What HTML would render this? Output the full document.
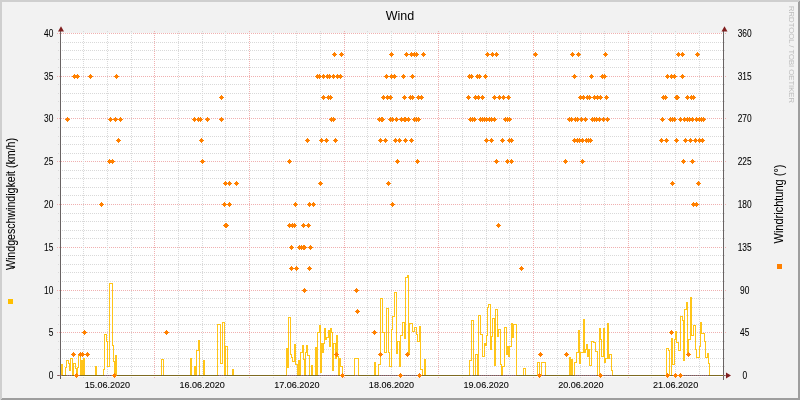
<!DOCTYPE html><html><head><meta charset="utf-8"><style>html,body{margin:0;padding:0;width:800px;height:400px;overflow:hidden;background:#f2f2f2}svg{display:block;-webkit-font-smoothing:antialiased}text{font-family:"Liberation Sans",sans-serif;stroke:#000;stroke-width:0.08px}</style></head><body>
<svg width="800" height="400" viewBox="0 0 800 400" style="will-change:transform">
<rect x="0" y="0" width="800" height="400" fill="#f2f2f2"/>
<path shape-rendering="crispEdges" fill="#cfcfcf" d="M0 0H800V1H0ZM0 1H799V2H0ZM0 2H2V399H0ZM0 399H1V400H0Z"/>
<path shape-rendering="crispEdges" fill="#9e9e9e" d="M799 1H800V400H799ZM798 2H799V400H798ZM1 399H798V400H1ZM2 398H798V399H2Z"/>
<rect x="61" y="33" width="662" height="344" fill="#ffffff"/>
<!--DATA-->
<g shape-rendering="crispEdges"><line x1="58" y1="366.5" x2="726" y2="366.5" stroke="#d9d9d9" stroke-width="1" stroke-dasharray="1 1"/><line x1="58" y1="358.5" x2="726" y2="358.5" stroke="#d9d9d9" stroke-width="1" stroke-dasharray="1 1"/><line x1="58" y1="349.5" x2="726" y2="349.5" stroke="#d9d9d9" stroke-width="1" stroke-dasharray="1 1"/><line x1="58" y1="341.5" x2="726" y2="341.5" stroke="#d9d9d9" stroke-width="1" stroke-dasharray="1 1"/><line x1="57" y1="332.5" x2="726" y2="332.5" stroke="#f0b0b0" stroke-width="1" stroke-dasharray="1 1" stroke-dashoffset="0"/><line x1="58" y1="324.5" x2="726" y2="324.5" stroke="#d9d9d9" stroke-width="1" stroke-dasharray="1 1"/><line x1="58" y1="315.5" x2="726" y2="315.5" stroke="#d9d9d9" stroke-width="1" stroke-dasharray="1 1"/><line x1="58" y1="307.5" x2="726" y2="307.5" stroke="#d9d9d9" stroke-width="1" stroke-dasharray="1 1"/><line x1="58" y1="298.5" x2="726" y2="298.5" stroke="#d9d9d9" stroke-width="1" stroke-dasharray="1 1"/><line x1="57" y1="290.5" x2="726" y2="290.5" stroke="#f0b0b0" stroke-width="1" stroke-dasharray="1 1" stroke-dashoffset="0"/><line x1="58" y1="281.5" x2="726" y2="281.5" stroke="#d9d9d9" stroke-width="1" stroke-dasharray="1 1"/><line x1="58" y1="272.5" x2="726" y2="272.5" stroke="#d9d9d9" stroke-width="1" stroke-dasharray="1 1"/><line x1="58" y1="264.5" x2="726" y2="264.5" stroke="#d9d9d9" stroke-width="1" stroke-dasharray="1 1"/><line x1="58" y1="255.5" x2="726" y2="255.5" stroke="#d9d9d9" stroke-width="1" stroke-dasharray="1 1"/><line x1="57" y1="247.5" x2="726" y2="247.5" stroke="#f0b0b0" stroke-width="1" stroke-dasharray="1 1" stroke-dashoffset="0"/><line x1="58" y1="238.5" x2="726" y2="238.5" stroke="#d9d9d9" stroke-width="1" stroke-dasharray="1 1"/><line x1="58" y1="230.5" x2="726" y2="230.5" stroke="#d9d9d9" stroke-width="1" stroke-dasharray="1 1"/><line x1="58" y1="221.5" x2="726" y2="221.5" stroke="#d9d9d9" stroke-width="1" stroke-dasharray="1 1"/><line x1="58" y1="213.5" x2="726" y2="213.5" stroke="#d9d9d9" stroke-width="1" stroke-dasharray="1 1"/><line x1="57" y1="204.5" x2="726" y2="204.5" stroke="#f0b0b0" stroke-width="1" stroke-dasharray="1 1" stroke-dashoffset="0"/><line x1="58" y1="195.5" x2="726" y2="195.5" stroke="#d9d9d9" stroke-width="1" stroke-dasharray="1 1"/><line x1="58" y1="187.5" x2="726" y2="187.5" stroke="#d9d9d9" stroke-width="1" stroke-dasharray="1 1"/><line x1="58" y1="178.5" x2="726" y2="178.5" stroke="#d9d9d9" stroke-width="1" stroke-dasharray="1 1"/><line x1="58" y1="170.5" x2="726" y2="170.5" stroke="#d9d9d9" stroke-width="1" stroke-dasharray="1 1"/><line x1="57" y1="161.5" x2="726" y2="161.5" stroke="#f0b0b0" stroke-width="1" stroke-dasharray="1 1" stroke-dashoffset="0"/><line x1="58" y1="153.5" x2="726" y2="153.5" stroke="#d9d9d9" stroke-width="1" stroke-dasharray="1 1"/><line x1="58" y1="144.5" x2="726" y2="144.5" stroke="#d9d9d9" stroke-width="1" stroke-dasharray="1 1"/><line x1="58" y1="136.5" x2="726" y2="136.5" stroke="#d9d9d9" stroke-width="1" stroke-dasharray="1 1"/><line x1="58" y1="127.5" x2="726" y2="127.5" stroke="#d9d9d9" stroke-width="1" stroke-dasharray="1 1"/><line x1="57" y1="118.5" x2="726" y2="118.5" stroke="#f0b0b0" stroke-width="1" stroke-dasharray="1 1" stroke-dashoffset="0"/><line x1="58" y1="110.5" x2="726" y2="110.5" stroke="#d9d9d9" stroke-width="1" stroke-dasharray="1 1"/><line x1="58" y1="101.5" x2="726" y2="101.5" stroke="#d9d9d9" stroke-width="1" stroke-dasharray="1 1"/><line x1="58" y1="93.5" x2="726" y2="93.5" stroke="#d9d9d9" stroke-width="1" stroke-dasharray="1 1"/><line x1="58" y1="84.5" x2="726" y2="84.5" stroke="#d9d9d9" stroke-width="1" stroke-dasharray="1 1"/><line x1="57" y1="76.5" x2="726" y2="76.5" stroke="#f0b0b0" stroke-width="1" stroke-dasharray="1 1" stroke-dashoffset="0"/><line x1="58" y1="67.5" x2="726" y2="67.5" stroke="#d9d9d9" stroke-width="1" stroke-dasharray="1 1"/><line x1="58" y1="59.5" x2="726" y2="59.5" stroke="#d9d9d9" stroke-width="1" stroke-dasharray="1 1"/><line x1="58" y1="50.5" x2="726" y2="50.5" stroke="#d9d9d9" stroke-width="1" stroke-dasharray="1 1"/><line x1="58" y1="42.5" x2="726" y2="42.5" stroke="#d9d9d9" stroke-width="1" stroke-dasharray="1 1"/><line x1="57" y1="33.5" x2="726" y2="33.5" stroke="#f0b0b0" stroke-width="1" stroke-dasharray="1 1" stroke-dashoffset="0"/><line x1="83.5" y1="31" x2="83.5" y2="378" stroke="#d9d9d9" stroke-width="1" stroke-dasharray="1 1"/><line x1="107.5" y1="31" x2="107.5" y2="378" stroke="#d9d9d9" stroke-width="1" stroke-dasharray="1 1"/><line x1="131.5" y1="31" x2="131.5" y2="378" stroke="#d9d9d9" stroke-width="1" stroke-dasharray="1 1"/><line x1="154.5" y1="31" x2="154.5" y2="378" stroke="#f0b0b0" stroke-width="1" stroke-dasharray="1 1"/><line x1="178.5" y1="31" x2="178.5" y2="378" stroke="#d9d9d9" stroke-width="1" stroke-dasharray="1 1"/><line x1="202.5" y1="31" x2="202.5" y2="378" stroke="#d9d9d9" stroke-width="1" stroke-dasharray="1 1"/><line x1="225.5" y1="31" x2="225.5" y2="378" stroke="#d9d9d9" stroke-width="1" stroke-dasharray="1 1"/><line x1="249.5" y1="31" x2="249.5" y2="378" stroke="#f0b0b0" stroke-width="1" stroke-dasharray="1 1"/><line x1="273.5" y1="31" x2="273.5" y2="378" stroke="#d9d9d9" stroke-width="1" stroke-dasharray="1 1"/><line x1="296.5" y1="31" x2="296.5" y2="378" stroke="#d9d9d9" stroke-width="1" stroke-dasharray="1 1"/><line x1="320.5" y1="31" x2="320.5" y2="378" stroke="#d9d9d9" stroke-width="1" stroke-dasharray="1 1"/><line x1="344.5" y1="31" x2="344.5" y2="378" stroke="#f0b0b0" stroke-width="1" stroke-dasharray="1 1"/><line x1="367.5" y1="31" x2="367.5" y2="378" stroke="#d9d9d9" stroke-width="1" stroke-dasharray="1 1"/><line x1="391.5" y1="31" x2="391.5" y2="378" stroke="#d9d9d9" stroke-width="1" stroke-dasharray="1 1"/><line x1="415.5" y1="31" x2="415.5" y2="378" stroke="#d9d9d9" stroke-width="1" stroke-dasharray="1 1"/><line x1="438.5" y1="31" x2="438.5" y2="378" stroke="#f0b0b0" stroke-width="1" stroke-dasharray="1 1"/><line x1="462.5" y1="31" x2="462.5" y2="378" stroke="#d9d9d9" stroke-width="1" stroke-dasharray="1 1"/><line x1="486.5" y1="31" x2="486.5" y2="378" stroke="#d9d9d9" stroke-width="1" stroke-dasharray="1 1"/><line x1="509.5" y1="31" x2="509.5" y2="378" stroke="#d9d9d9" stroke-width="1" stroke-dasharray="1 1"/><line x1="533.5" y1="31" x2="533.5" y2="378" stroke="#f0b0b0" stroke-width="1" stroke-dasharray="1 1"/><line x1="557.5" y1="31" x2="557.5" y2="378" stroke="#d9d9d9" stroke-width="1" stroke-dasharray="1 1"/><line x1="580.5" y1="31" x2="580.5" y2="378" stroke="#d9d9d9" stroke-width="1" stroke-dasharray="1 1"/><line x1="604.5" y1="31" x2="604.5" y2="378" stroke="#d9d9d9" stroke-width="1" stroke-dasharray="1 1"/><line x1="628.5" y1="31" x2="628.5" y2="378" stroke="#f0b0b0" stroke-width="1" stroke-dasharray="1 1"/><line x1="651.5" y1="31" x2="651.5" y2="378" stroke="#d9d9d9" stroke-width="1" stroke-dasharray="1 1"/><line x1="675.5" y1="31" x2="675.5" y2="378" stroke="#d9d9d9" stroke-width="1" stroke-dasharray="1 1"/><line x1="699.5" y1="31" x2="699.5" y2="378" stroke="#d9d9d9" stroke-width="1" stroke-dasharray="1 1"/></g>
<g shape-rendering="crispEdges">
<rect x="60" y="31" width="1" height="348" fill="#686262"/>
<rect x="723" y="31" width="1" height="349" fill="#686262"/>
</g>
<path fill="none" stroke="#ffbf00" stroke-width="1" shape-rendering="crispEdges" stroke-opacity="0.9" d="M61.5 375.5H61.5V364.5H62.5V375.5H65.5V367.5H66.5V360.5H68.5V363.5H69.5V370.5H70.5V358.5H72.5V375.5H73.5V363.5H75.5V368.5H76.5V375.5H77.5V367.5H78.5V355.5H80.5V375.5H81.5V360.5H82.5V375.5H83.5V358.5H84.5V375.5H95.5V366.5H96.5V375.5H103.5V369.5H104.5V334.5H106.5V341.5H107.5V366.5H109.5V283.5H112.5V345.5H113.5V361.5H114.5V375.5H115.5V355.5H116.5V375.5H161.5V359.5H163.5V375.5H190.5V358.5H191.5V375.5H194.5V366.5H195.5V375.5H196.5V350.5H198.5V340.5H199.5V375.5H203.5V360.5H204.5V375.5H217.5V324.5H220.5V363.5H222.5V322.5H224.5V375.5H225.5V346.5H227.5V375.5H232.5V369.5H233.5V375.5H286.5V348.5H287.5V367.5H288.5V317.5H290.5V354.5H291.5V357.5H292.5V361.5H294.5V344.5H295.5V364.5H297.5V375.5H298.5V360.5H299.5V375.5H300.5V352.5H302.5V345.5H303.5V359.5H304.5V375.5H305.5V352.5H306.5V345.5H307.5V355.5H309.5V375.5H311.5V365.5H312.5V375.5H315.5V347.5H316.5V375.5H317.5V332.5H319.5V325.5H320.5V372.5H321.5V343.5H322.5V352.5H323.5V343.5H324.5V328.5H325.5V339.5H326.5V337.5H328.5V330.5H329.5V346.5H330.5V328.5H331.5V332.5H332.5V370.5H333.5V343.5H335.5V358.5H336.5V335.5H337.5V356.5H338.5V375.5H339.5V358.5H340.5V366.5H342.5V375.5H354.5V358.5H358.5V375.5H374.5V362.5H375.5V375.5H378.5V364.5H380.5V298.5H382.5V332.5H384.5V352.5H386.5V308.5H388.5V352.5H389.5V366.5H391.5V329.5H392.5V316.5H394.5V292.5H396.5V353.5H397.5V341.5H399.5V366.5H400.5V335.5H402.5V322.5H404.5V338.5H405.5V277.5H407.5V275.5H408.5V354.5H409.5V323.5H412.5V331.5H414.5V327.5H416.5V334.5H417.5V341.5H419.5V326.5H420.5V369.5H422.5V375.5H424.5V359.5H425.5V375.5H469.5V360.5H471.5V320.5H473.5V375.5H475.5V354.5H477.5V375.5H478.5V315.5H480.5V334.5H482.5V356.5H484.5V343.5H485.5V345.5H486.5V335.5H487.5V307.5H488.5V304.5H490.5V349.5H491.5V336.5H492.5V318.5H494.5V365.5H495.5V309.5H497.5V336.5H498.5V329.5H500.5V364.5H501.5V375.5H502.5V366.5H504.5V327.5H506.5V354.5H507.5V346.5H508.5V356.5H509.5V346.5H511.5V323.5H512.5V337.5H513.5V324.5H516.5V375.5H523.5V368.5H525.5V375.5H537.5V362.5H539.5V375.5H541.5V362.5H545.5V375.5H569.5V357.5H570.5V375.5H571.5V359.5H572.5V375.5H574.5V362.5H576.5V352.5H578.5V330.5H579.5V363.5H580.5V352.5H583.5V319.5H584.5V352.5H585.5V349.5H586.5V344.5H587.5V356.5H588.5V349.5H589.5V365.5H591.5V341.5H593.5V342.5H595.5V351.5H597.5V375.5H599.5V328.5H600.5V339.5H601.5V356.5H603.5V328.5H604.5V362.5H605.5V358.5H607.5V323.5H608.5V358.5H609.5V354.5H611.5V370.5H612.5V375.5H666.5V348.5H668.5V350.5H669.5V375.5H671.5V338.5H672.5V364.5H674.5V339.5H675.5V331.5H676.5V342.5H678.5V350.5H680.5V316.5H682.5V320.5H683.5V360.5H684.5V309.5H686.5V302.5H687.5V354.5H688.5V339.5H690.5V297.5H691.5V335.5H693.5V325.5H695.5V349.5H696.5V357.5H699.5V346.5H700.5V322.5H701.5V333.5H704.5V341.5H705.5V357.5H707.5V353.5H708.5V363.5H709.5V375.5H723"/>
<rect x="57" y="375" width="670" height="1" fill="#6a6262" shape-rendering="crispEdges"/>
<line x1="57" y1="375.5" x2="726" y2="375.5" stroke="#a87272" stroke-width="1" stroke-dasharray="1 1" shape-rendering="crispEdges"/>
<path fill="#7d6a22" shape-rendering="crispEdges" d="M62 375h4v1h-4zM72 375h2v1h-2zM76 375h2v1h-2zM80 375h2v1h-2zM82 375h2v1h-2zM84 375h12v1h-12zM96 375h8v1h-8zM114 375h2v1h-2zM116 375h46v1h-46zM163 375h28v1h-28zM191 375h4v1h-4zM195 375h2v1h-2zM199 375h5v1h-5zM204 375h14v1h-14zM224 375h2v1h-2zM227 375h6v1h-6zM233 375h54v1h-54zM297 375h2v1h-2zM299 375h2v1h-2zM304 375h2v1h-2zM309 375h3v1h-3zM312 375h4v1h-4zM316 375h2v1h-2zM338 375h2v1h-2zM342 375h13v1h-13zM358 375h17v1h-17zM375 375h4v1h-4zM422 375h3v1h-3zM425 375h45v1h-45zM473 375h3v1h-3zM477 375h2v1h-2zM501 375h2v1h-2zM516 375h8v1h-8zM525 375h13v1h-13zM539 375h3v1h-3zM545 375h25v1h-25zM570 375h2v1h-2zM572 375h3v1h-3zM597 375h3v1h-3zM612 375h55v1h-55zM669 375h3v1h-3zM709 375h14v1h-14z"/>
<path d="M58 31.5 L61 26.2 L64 31.5 Z" fill="#801f1f"/>
<path d="M721.5 31.5 L724.5 26.2 L727.5 31.5 Z" fill="#801f1f"/>
<path d="M726 372.5 L731 375.5 L726 378.5 Z" fill="#801f1f"/>
<path shape-rendering="crispEdges" fill="#ff8000" d="M334 52h1v5h-1zM332 54h5v1h-5zM333 53h3v3h-3zM341 52h1v5h-1zM339 54h5v1h-5zM340 53h3v3h-3zM391 52h1v5h-1zM389 54h5v1h-5zM390 53h3v3h-3zM406 52h1v5h-1zM404 54h5v1h-5zM405 53h3v3h-3zM411 52h1v5h-1zM409 54h5v1h-5zM410 53h3v3h-3zM414 52h1v5h-1zM412 54h5v1h-5zM413 53h3v3h-3zM416 52h1v5h-1zM414 54h5v1h-5zM415 53h3v3h-3zM423 52h1v5h-1zM421 54h5v1h-5zM422 53h3v3h-3zM487 52h1v5h-1zM485 54h5v1h-5zM486 53h3v3h-3zM492 52h1v5h-1zM490 54h5v1h-5zM491 53h3v3h-3zM496 52h1v5h-1zM494 54h5v1h-5zM495 53h3v3h-3zM535 52h1v5h-1zM533 54h5v1h-5zM534 53h3v3h-3zM572 52h1v5h-1zM570 54h5v1h-5zM571 53h3v3h-3zM578 52h1v5h-1zM576 54h5v1h-5zM577 53h3v3h-3zM605 52h1v5h-1zM603 54h5v1h-5zM604 53h3v3h-3zM678 52h1v5h-1zM676 54h5v1h-5zM677 53h3v3h-3zM682 52h1v5h-1zM680 54h5v1h-5zM681 53h3v3h-3zM697 52h1v5h-1zM695 54h5v1h-5zM696 53h3v3h-3zM74 74h1v5h-1zM72 76h5v1h-5zM73 75h3v3h-3zM77 74h1v5h-1zM75 76h5v1h-5zM76 75h3v3h-3zM90 74h1v5h-1zM88 76h5v1h-5zM89 75h3v3h-3zM116 74h1v5h-1zM114 76h5v1h-5zM115 75h3v3h-3zM317 74h1v5h-1zM315 76h5v1h-5zM316 75h3v3h-3zM319 74h1v5h-1zM317 76h5v1h-5zM318 75h3v3h-3zM323 74h1v5h-1zM321 76h5v1h-5zM322 75h3v3h-3zM327 74h1v5h-1zM325 76h5v1h-5zM326 75h3v3h-3zM329 74h1v5h-1zM327 76h5v1h-5zM328 75h3v3h-3zM333 74h1v5h-1zM331 76h5v1h-5zM332 75h3v3h-3zM337 74h1v5h-1zM335 76h5v1h-5zM336 75h3v3h-3zM340 74h1v5h-1zM338 76h5v1h-5zM339 75h3v3h-3zM386 74h1v5h-1zM384 76h5v1h-5zM385 75h3v3h-3zM391 74h1v5h-1zM389 76h5v1h-5zM390 75h3v3h-3zM394 74h1v5h-1zM392 76h5v1h-5zM393 75h3v3h-3zM403 74h1v5h-1zM401 76h5v1h-5zM402 75h3v3h-3zM412 74h1v5h-1zM410 76h5v1h-5zM411 75h3v3h-3zM469 74h1v5h-1zM467 76h5v1h-5zM468 75h3v3h-3zM471 74h1v5h-1zM469 76h5v1h-5zM470 75h3v3h-3zM477 74h1v5h-1zM475 76h5v1h-5zM476 75h3v3h-3zM479 74h1v5h-1zM477 76h5v1h-5zM478 75h3v3h-3zM485 74h1v5h-1zM483 76h5v1h-5zM484 75h3v3h-3zM574 74h1v5h-1zM572 76h5v1h-5zM573 75h3v3h-3zM591 74h1v5h-1zM589 76h5v1h-5zM590 75h3v3h-3zM602 74h1v5h-1zM600 76h5v1h-5zM601 75h3v3h-3zM604 74h1v5h-1zM602 76h5v1h-5zM603 75h3v3h-3zM667 74h1v5h-1zM665 76h5v1h-5zM666 75h3v3h-3zM671 74h1v5h-1zM669 76h5v1h-5zM670 75h3v3h-3zM674 74h1v5h-1zM672 76h5v1h-5zM673 75h3v3h-3zM682 74h1v5h-1zM680 76h5v1h-5zM681 75h3v3h-3zM221 95h1v5h-1zM219 97h5v1h-5zM220 96h3v3h-3zM323 95h1v5h-1zM321 97h5v1h-5zM322 96h3v3h-3zM328 95h1v5h-1zM326 97h5v1h-5zM327 96h3v3h-3zM330 95h1v5h-1zM328 97h5v1h-5zM329 96h3v3h-3zM383 95h1v5h-1zM381 97h5v1h-5zM382 96h3v3h-3zM387 95h1v5h-1zM385 97h5v1h-5zM386 96h3v3h-3zM390 95h1v5h-1zM388 97h5v1h-5zM389 96h3v3h-3zM404 95h1v5h-1zM402 97h5v1h-5zM403 96h3v3h-3zM410 95h1v5h-1zM408 97h5v1h-5zM409 96h3v3h-3zM412 95h1v5h-1zM410 97h5v1h-5zM411 96h3v3h-3zM418 95h1v5h-1zM416 97h5v1h-5zM417 96h3v3h-3zM421 95h1v5h-1zM419 97h5v1h-5zM420 96h3v3h-3zM468 95h1v5h-1zM466 97h5v1h-5zM467 96h3v3h-3zM475 95h1v5h-1zM473 97h5v1h-5zM474 96h3v3h-3zM478 95h1v5h-1zM476 97h5v1h-5zM477 96h3v3h-3zM482 95h1v5h-1zM480 97h5v1h-5zM481 96h3v3h-3zM494 95h1v5h-1zM492 97h5v1h-5zM493 96h3v3h-3zM499 95h1v5h-1zM497 97h5v1h-5zM498 96h3v3h-3zM503 95h1v5h-1zM501 97h5v1h-5zM502 96h3v3h-3zM508 95h1v5h-1zM506 97h5v1h-5zM507 96h3v3h-3zM580 95h1v5h-1zM578 97h5v1h-5zM579 96h3v3h-3zM583 95h1v5h-1zM581 97h5v1h-5zM582 96h3v3h-3zM587 95h1v5h-1zM585 97h5v1h-5zM586 96h3v3h-3zM589 95h1v5h-1zM587 97h5v1h-5zM588 96h3v3h-3zM594 95h1v5h-1zM592 97h5v1h-5zM593 96h3v3h-3zM597 95h1v5h-1zM595 97h5v1h-5zM596 96h3v3h-3zM600 95h1v5h-1zM598 97h5v1h-5zM599 96h3v3h-3zM606 95h1v5h-1zM604 97h5v1h-5zM605 96h3v3h-3zM663 95h1v5h-1zM661 97h5v1h-5zM662 96h3v3h-3zM665 95h1v5h-1zM663 97h5v1h-5zM664 96h3v3h-3zM676 95h1v5h-1zM674 97h5v1h-5zM675 96h3v3h-3zM677 95h1v5h-1zM675 97h5v1h-5zM676 96h3v3h-3zM687 95h1v5h-1zM685 97h5v1h-5zM686 96h3v3h-3zM691 95h1v5h-1zM689 97h5v1h-5zM690 96h3v3h-3zM693 95h1v5h-1zM691 97h5v1h-5zM692 96h3v3h-3zM67 117h1v5h-1zM65 119h5v1h-5zM66 118h3v3h-3zM110 117h1v5h-1zM108 119h5v1h-5zM109 118h3v3h-3zM115 117h1v5h-1zM113 119h5v1h-5zM114 118h3v3h-3zM120 117h1v5h-1zM118 119h5v1h-5zM119 118h3v3h-3zM194 117h1v5h-1zM192 119h5v1h-5zM193 118h3v3h-3zM198 117h1v5h-1zM196 119h5v1h-5zM197 118h3v3h-3zM200 117h1v5h-1zM198 119h5v1h-5zM199 118h3v3h-3zM207 117h1v5h-1zM205 119h5v1h-5zM206 118h3v3h-3zM221 117h1v5h-1zM219 119h5v1h-5zM220 118h3v3h-3zM331 117h1v5h-1zM329 119h5v1h-5zM330 118h3v3h-3zM333 117h1v5h-1zM331 119h5v1h-5zM332 118h3v3h-3zM379 117h1v5h-1zM377 119h5v1h-5zM378 118h3v3h-3zM381 117h1v5h-1zM379 119h5v1h-5zM380 118h3v3h-3zM382 117h1v5h-1zM380 119h5v1h-5zM381 118h3v3h-3zM390 117h1v5h-1zM388 119h5v1h-5zM389 118h3v3h-3zM392 117h1v5h-1zM390 119h5v1h-5zM391 118h3v3h-3zM396 117h1v5h-1zM394 119h5v1h-5zM395 118h3v3h-3zM401 117h1v5h-1zM399 119h5v1h-5zM400 118h3v3h-3zM404 117h1v5h-1zM402 119h5v1h-5zM403 118h3v3h-3zM405 117h1v5h-1zM403 119h5v1h-5zM404 118h3v3h-3zM408 117h1v5h-1zM406 119h5v1h-5zM407 118h3v3h-3zM414 117h1v5h-1zM412 119h5v1h-5zM413 118h3v3h-3zM416 117h1v5h-1zM414 119h5v1h-5zM415 118h3v3h-3zM418 117h1v5h-1zM416 119h5v1h-5zM417 118h3v3h-3zM470 117h1v5h-1zM468 119h5v1h-5zM469 118h3v3h-3zM472 117h1v5h-1zM470 119h5v1h-5zM471 118h3v3h-3zM474 117h1v5h-1zM472 119h5v1h-5zM473 118h3v3h-3zM480 117h1v5h-1zM478 119h5v1h-5zM479 118h3v3h-3zM482 117h1v5h-1zM480 119h5v1h-5zM481 118h3v3h-3zM484 117h1v5h-1zM482 119h5v1h-5zM483 118h3v3h-3zM486 117h1v5h-1zM484 119h5v1h-5zM485 118h3v3h-3zM489 117h1v5h-1zM487 119h5v1h-5zM488 118h3v3h-3zM491 117h1v5h-1zM489 119h5v1h-5zM490 118h3v3h-3zM494 117h1v5h-1zM492 119h5v1h-5zM493 118h3v3h-3zM505 117h1v5h-1zM503 119h5v1h-5zM504 118h3v3h-3zM507 117h1v5h-1zM505 119h5v1h-5zM506 118h3v3h-3zM509 117h1v5h-1zM507 119h5v1h-5zM508 118h3v3h-3zM569 117h1v5h-1zM567 119h5v1h-5zM568 118h3v3h-3zM571 117h1v5h-1zM569 119h5v1h-5zM570 118h3v3h-3zM575 117h1v5h-1zM573 119h5v1h-5zM574 118h3v3h-3zM577 117h1v5h-1zM575 119h5v1h-5zM576 118h3v3h-3zM581 117h1v5h-1zM579 119h5v1h-5zM580 118h3v3h-3zM585 117h1v5h-1zM583 119h5v1h-5zM584 118h3v3h-3zM592 117h1v5h-1zM590 119h5v1h-5zM591 118h3v3h-3zM594 117h1v5h-1zM592 119h5v1h-5zM593 118h3v3h-3zM596 117h1v5h-1zM594 119h5v1h-5zM595 118h3v3h-3zM599 117h1v5h-1zM597 119h5v1h-5zM598 118h3v3h-3zM603 117h1v5h-1zM601 119h5v1h-5zM602 118h3v3h-3zM607 117h1v5h-1zM605 119h5v1h-5zM606 118h3v3h-3zM662 117h1v5h-1zM660 119h5v1h-5zM661 118h3v3h-3zM670 117h1v5h-1zM668 119h5v1h-5zM669 118h3v3h-3zM672 117h1v5h-1zM670 119h5v1h-5zM671 118h3v3h-3zM674 117h1v5h-1zM672 119h5v1h-5zM673 118h3v3h-3zM680 117h1v5h-1zM678 119h5v1h-5zM679 118h3v3h-3zM684 117h1v5h-1zM682 119h5v1h-5zM683 118h3v3h-3zM687 117h1v5h-1zM685 119h5v1h-5zM686 118h3v3h-3zM689 117h1v5h-1zM687 119h5v1h-5zM688 118h3v3h-3zM692 117h1v5h-1zM690 119h5v1h-5zM691 118h3v3h-3zM696 117h1v5h-1zM694 119h5v1h-5zM695 118h3v3h-3zM699 117h1v5h-1zM697 119h5v1h-5zM698 118h3v3h-3zM701 117h1v5h-1zM699 119h5v1h-5zM700 118h3v3h-3zM703 117h1v5h-1zM701 119h5v1h-5zM702 118h3v3h-3zM118 138h1v5h-1zM116 140h5v1h-5zM117 139h3v3h-3zM201 138h1v5h-1zM199 140h5v1h-5zM200 139h3v3h-3zM307 138h1v5h-1zM305 140h5v1h-5zM306 139h3v3h-3zM321 138h1v5h-1zM319 140h5v1h-5zM320 139h3v3h-3zM326 138h1v5h-1zM324 140h5v1h-5zM325 139h3v3h-3zM335 138h1v5h-1zM333 140h5v1h-5zM334 139h3v3h-3zM380 138h1v5h-1zM378 140h5v1h-5zM379 139h3v3h-3zM385 138h1v5h-1zM383 140h5v1h-5zM384 139h3v3h-3zM395 138h1v5h-1zM393 140h5v1h-5zM394 139h3v3h-3zM399 138h1v5h-1zM397 140h5v1h-5zM398 139h3v3h-3zM405 138h1v5h-1zM403 140h5v1h-5zM404 139h3v3h-3zM411 138h1v5h-1zM409 140h5v1h-5zM410 139h3v3h-3zM486 138h1v5h-1zM484 140h5v1h-5zM485 139h3v3h-3zM491 138h1v5h-1zM489 140h5v1h-5zM490 139h3v3h-3zM502 138h1v5h-1zM500 140h5v1h-5zM501 139h3v3h-3zM509 138h1v5h-1zM507 140h5v1h-5zM508 139h3v3h-3zM511 138h1v5h-1zM509 140h5v1h-5zM510 139h3v3h-3zM574 138h1v5h-1zM572 140h5v1h-5zM573 139h3v3h-3zM577 138h1v5h-1zM575 140h5v1h-5zM576 139h3v3h-3zM579 138h1v5h-1zM577 140h5v1h-5zM578 139h3v3h-3zM582 138h1v5h-1zM580 140h5v1h-5zM581 139h3v3h-3zM586 138h1v5h-1zM584 140h5v1h-5zM585 139h3v3h-3zM588 138h1v5h-1zM586 140h5v1h-5zM587 139h3v3h-3zM590 138h1v5h-1zM588 140h5v1h-5zM589 139h3v3h-3zM661 138h1v5h-1zM659 140h5v1h-5zM660 139h3v3h-3zM666 138h1v5h-1zM664 140h5v1h-5zM665 139h3v3h-3zM676 138h1v5h-1zM674 140h5v1h-5zM675 139h3v3h-3zM685 138h1v5h-1zM683 140h5v1h-5zM684 139h3v3h-3zM690 138h1v5h-1zM688 140h5v1h-5zM689 139h3v3h-3zM695 138h1v5h-1zM693 140h5v1h-5zM694 139h3v3h-3zM699 138h1v5h-1zM697 140h5v1h-5zM698 139h3v3h-3zM702 138h1v5h-1zM700 140h5v1h-5zM701 139h3v3h-3zM109 159h1v5h-1zM107 161h5v1h-5zM108 160h3v3h-3zM112 159h1v5h-1zM110 161h5v1h-5zM111 160h3v3h-3zM202 159h1v5h-1zM200 161h5v1h-5zM201 160h3v3h-3zM289 159h1v5h-1zM287 161h5v1h-5zM288 160h3v3h-3zM397 159h1v5h-1zM395 161h5v1h-5zM396 160h3v3h-3zM417 159h1v5h-1zM415 161h5v1h-5zM416 160h3v3h-3zM496 159h1v5h-1zM494 161h5v1h-5zM495 160h3v3h-3zM507 159h1v5h-1zM505 161h5v1h-5zM506 160h3v3h-3zM511 159h1v5h-1zM509 161h5v1h-5zM510 160h3v3h-3zM565 159h1v5h-1zM563 161h5v1h-5zM564 160h3v3h-3zM582 159h1v5h-1zM580 161h5v1h-5zM581 160h3v3h-3zM683 159h1v5h-1zM681 161h5v1h-5zM682 160h3v3h-3zM692 159h1v5h-1zM690 161h5v1h-5zM691 160h3v3h-3zM225 181h1v5h-1zM223 183h5v1h-5zM224 182h3v3h-3zM229 181h1v5h-1zM227 183h5v1h-5zM228 182h3v3h-3zM236 181h1v5h-1zM234 183h5v1h-5zM235 182h3v3h-3zM320 181h1v5h-1zM318 183h5v1h-5zM319 182h3v3h-3zM388 181h1v5h-1zM386 183h5v1h-5zM387 182h3v3h-3zM672 181h1v5h-1zM670 183h5v1h-5zM671 182h3v3h-3zM698 181h1v5h-1zM696 183h5v1h-5zM697 182h3v3h-3zM101 202h1v5h-1zM99 204h5v1h-5zM100 203h3v3h-3zM224 202h1v5h-1zM222 204h5v1h-5zM223 203h3v3h-3zM229 202h1v5h-1zM227 204h5v1h-5zM228 203h3v3h-3zM295 202h1v5h-1zM293 204h5v1h-5zM294 203h3v3h-3zM309 202h1v5h-1zM307 204h5v1h-5zM308 203h3v3h-3zM313 202h1v5h-1zM311 204h5v1h-5zM312 203h3v3h-3zM392 202h1v5h-1zM390 204h5v1h-5zM391 203h3v3h-3zM693 202h1v5h-1zM691 204h5v1h-5zM692 203h3v3h-3zM696 202h1v5h-1zM694 204h5v1h-5zM695 203h3v3h-3zM225 223h1v5h-1zM223 225h5v1h-5zM224 224h3v3h-3zM226 223h1v5h-1zM224 225h5v1h-5zM225 224h3v3h-3zM289 223h1v5h-1zM287 225h5v1h-5zM288 224h3v3h-3zM292 223h1v5h-1zM290 225h5v1h-5zM291 224h3v3h-3zM294 223h1v5h-1zM292 225h5v1h-5zM293 224h3v3h-3zM303 223h1v5h-1zM301 225h5v1h-5zM302 224h3v3h-3zM308 223h1v5h-1zM306 225h5v1h-5zM307 224h3v3h-3zM498 223h1v5h-1zM496 225h5v1h-5zM497 224h3v3h-3zM291 245h1v5h-1zM289 247h5v1h-5zM290 246h3v3h-3zM299 245h1v5h-1zM297 247h5v1h-5zM298 246h3v3h-3zM301 245h1v5h-1zM299 247h5v1h-5zM300 246h3v3h-3zM303 245h1v5h-1zM301 247h5v1h-5zM302 246h3v3h-3zM304 245h1v5h-1zM302 247h5v1h-5zM303 246h3v3h-3zM310 245h1v5h-1zM308 247h5v1h-5zM309 246h3v3h-3zM291 266h1v5h-1zM289 268h5v1h-5zM290 267h3v3h-3zM296 266h1v5h-1zM294 268h5v1h-5zM295 267h3v3h-3zM309 266h1v5h-1zM307 268h5v1h-5zM308 267h3v3h-3zM521 266h1v5h-1zM519 268h5v1h-5zM520 267h3v3h-3zM304 288h1v5h-1zM302 290h5v1h-5zM303 289h3v3h-3zM356 288h1v5h-1zM354 290h5v1h-5zM355 289h3v3h-3zM357 309h1v5h-1zM355 311h5v1h-5zM356 310h3v3h-3zM84 330h1v5h-1zM82 332h5v1h-5zM83 331h3v3h-3zM166 330h1v5h-1zM164 332h5v1h-5zM165 331h3v3h-3zM374 330h1v5h-1zM372 332h5v1h-5zM373 331h3v3h-3zM671 330h1v5h-1zM669 332h5v1h-5zM670 331h3v3h-3zM73 352h1v5h-1zM71 354h5v1h-5zM72 353h3v3h-3zM80 352h1v5h-1zM78 354h5v1h-5zM79 353h3v3h-3zM82 352h1v5h-1zM80 354h5v1h-5zM81 353h3v3h-3zM87 352h1v5h-1zM85 354h5v1h-5zM86 353h3v3h-3zM336 352h1v5h-1zM334 354h5v1h-5zM335 353h3v3h-3zM380 352h1v5h-1zM378 354h5v1h-5zM379 353h3v3h-3zM407 352h1v5h-1zM405 354h5v1h-5zM406 353h3v3h-3zM540 352h1v5h-1zM538 354h5v1h-5zM539 353h3v3h-3zM566 352h1v5h-1zM564 354h5v1h-5zM565 353h3v3h-3zM688 352h1v5h-1zM686 354h5v1h-5zM687 353h3v3h-3zM76 373h1v5h-1zM74 375h5v1h-5zM75 374h3v3h-3zM114 373h1v5h-1zM112 375h5v1h-5zM113 374h3v3h-3zM342 373h1v5h-1zM340 375h5v1h-5zM341 374h3v3h-3zM400 373h1v5h-1zM398 375h5v1h-5zM399 374h3v3h-3zM419 373h1v5h-1zM417 375h5v1h-5zM418 374h3v3h-3zM539 373h1v5h-1zM537 375h5v1h-5zM538 374h3v3h-3zM600 373h1v5h-1zM598 375h5v1h-5zM599 374h3v3h-3zM667 373h1v5h-1zM665 375h5v1h-5zM666 374h3v3h-3zM675 373h1v5h-1zM673 375h5v1h-5zM674 374h3v3h-3zM680 373h1v5h-1zM678 375h5v1h-5zM679 374h3v3h-3z"/>
<text x="400" y="20" font-size="13" style="stroke:none" text-anchor="middle" textLength="28.5" lengthAdjust="spacingAndGlyphs">Wind</text><text x="53.3" y="379.3" font-size="10" text-anchor="end" textLength="4.65" lengthAdjust="spacingAndGlyphs">0</text><text x="744.7" y="379.3" font-size="10" text-anchor="middle" textLength="4.65" lengthAdjust="spacingAndGlyphs">0</text><text x="53.3" y="336.3" font-size="10" text-anchor="end" textLength="4.65" lengthAdjust="spacingAndGlyphs">5</text><text x="744.7" y="336.3" font-size="10" text-anchor="middle" textLength="9.3" lengthAdjust="spacingAndGlyphs">45</text><text x="53.3" y="294.3" font-size="10" text-anchor="end" textLength="9.3" lengthAdjust="spacingAndGlyphs">10</text><text x="744.7" y="294.3" font-size="10" text-anchor="middle" textLength="9.3" lengthAdjust="spacingAndGlyphs">90</text><text x="53.3" y="251.3" font-size="10" text-anchor="end" textLength="9.3" lengthAdjust="spacingAndGlyphs">15</text><text x="744.7" y="251.3" font-size="10" text-anchor="middle" textLength="13.950000000000001" lengthAdjust="spacingAndGlyphs">135</text><text x="53.3" y="208.3" font-size="10" text-anchor="end" textLength="9.3" lengthAdjust="spacingAndGlyphs">20</text><text x="744.7" y="208.3" font-size="10" text-anchor="middle" textLength="13.950000000000001" lengthAdjust="spacingAndGlyphs">180</text><text x="53.3" y="165.3" font-size="10" text-anchor="end" textLength="9.3" lengthAdjust="spacingAndGlyphs">25</text><text x="744.7" y="165.3" font-size="10" text-anchor="middle" textLength="13.950000000000001" lengthAdjust="spacingAndGlyphs">225</text><text x="53.3" y="122.3" font-size="10" text-anchor="end" textLength="9.3" lengthAdjust="spacingAndGlyphs">30</text><text x="744.7" y="122.3" font-size="10" text-anchor="middle" textLength="13.950000000000001" lengthAdjust="spacingAndGlyphs">270</text><text x="53.3" y="80.3" font-size="10" text-anchor="end" textLength="9.3" lengthAdjust="spacingAndGlyphs">35</text><text x="744.7" y="80.3" font-size="10" text-anchor="middle" textLength="13.950000000000001" lengthAdjust="spacingAndGlyphs">315</text><text x="53.3" y="37.3" font-size="10" text-anchor="end" textLength="9.3" lengthAdjust="spacingAndGlyphs">40</text><text x="744.7" y="37.3" font-size="10" text-anchor="middle" textLength="13.950000000000001" lengthAdjust="spacingAndGlyphs">360</text><text x="107.46000000000001" y="388" font-size="9.8" text-anchor="middle" textLength="45.3" lengthAdjust="spacingAndGlyphs">15.06.2020</text><text x="202.14000000000001" y="388" font-size="9.8" text-anchor="middle" textLength="45.3" lengthAdjust="spacingAndGlyphs">16.06.2020</text><text x="296.82000000000005" y="388" font-size="9.8" text-anchor="middle" textLength="45.3" lengthAdjust="spacingAndGlyphs">17.06.2020</text><text x="391.5" y="388" font-size="9.8" text-anchor="middle" textLength="45.3" lengthAdjust="spacingAndGlyphs">18.06.2020</text><text x="486.18" y="388" font-size="9.8" text-anchor="middle" textLength="45.3" lengthAdjust="spacingAndGlyphs">19.06.2020</text><text x="580.8600000000001" y="388" font-size="9.8" text-anchor="middle" textLength="45.3" lengthAdjust="spacingAndGlyphs">20.06.2020</text><text x="675.54" y="388" font-size="9.8" text-anchor="middle" textLength="45.3" lengthAdjust="spacingAndGlyphs">21.06.2020</text><text transform="translate(14.8,204) rotate(-90)" font-size="12" text-anchor="middle" textLength="132" lengthAdjust="spacingAndGlyphs">Windgeschwindigkeit (km/h)</text><text transform="translate(783.2,204) rotate(-90)" font-size="12" text-anchor="middle" textLength="79" lengthAdjust="spacingAndGlyphs">Windrichtung (°)</text><text transform="translate(789,54.5) rotate(90)" font-size="7.5" fill="#bdbdbd" style="stroke:none" text-anchor="middle" textLength="97" lengthAdjust="spacingAndGlyphs">RRDTOOL / TOBI OETIKER</text>
<rect x="8" y="299" width="5" height="5" fill="#ffbf00"/>
<rect x="777" y="264" width="5" height="5" fill="#ff8000"/>
</svg></body></html>
